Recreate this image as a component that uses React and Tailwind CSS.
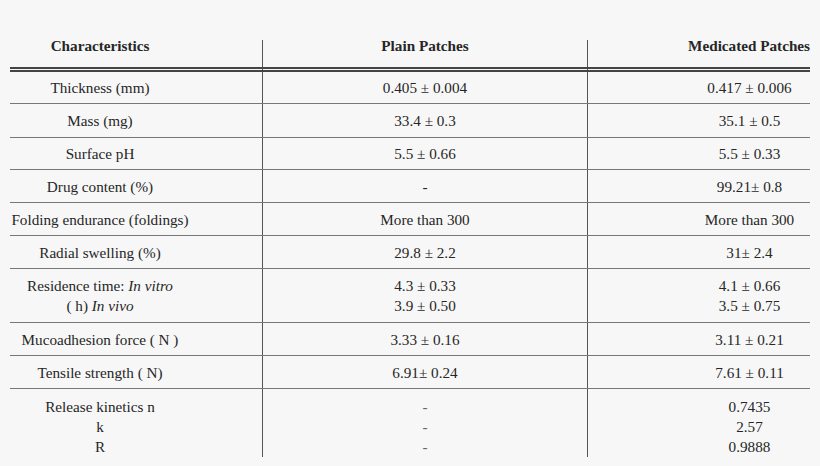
import React from "react";

const rows = [
  { h: "h-[32px]", c: ["Thickness (mm)"], p: ["0.405 ± 0.004"], m: ["0.417 ± 0.006"] },
  { h: "h-[34px]", c: ["Mass (mg)"], p: ["33.4 ± 0.3"], m: ["35.1 ± 0.5"] },
  { h: "h-[32px]", c: ["Surface pH"], p: ["5.5 ± 0.66"], m: ["5.5 ± 0.33"] },
  { h: "h-[33px]", c: ["Drug content (%)"], p: ["-"], m: ["99.21± 0.8"] },
  { h: "h-[33px]", c: ["Folding endurance (foldings)"], p: ["More than 300"], m: ["More than 300"] },
  { h: "h-[33px]", c: ["Radial swelling (%)"], p: ["29.8 ± 2.2"], m: ["31± 2.4"] },
  {
    h: "h-[54px]",
    c: [
      <>Residence time: <i>In vitro</i></>,
      <>( h) <i>In vivo</i></>,
    ],
    p: ["4.3 ± 0.33", "3.9 ± 0.50"],
    m: ["4.1 ± 0.66", "3.5 ± 0.75"],
  },
  { h: "h-[33px]", c: ["Mucoadhesion force ( N )"], p: ["3.33 ± 0.16"], m: ["3.11 ± 0.21"] },
  { h: "h-[33px]", c: ["Tensile strength ( N)"], p: ["6.91± 0.24"], m: ["7.61 ± 0.11"] },
];

function Lines({ items }) {
  return (
    <div className="flex flex-col items-center">
      {items.map((t, i) => (
        <div key={i} className="leading-[20px] whitespace-nowrap">{t}</div>
      ))}
    </div>
  );
}

export default function App() {
  return (
    <div className="w-[820px] h-[466px] bg-[#f7f7f7] text-[#262626] text-[15.2px] pt-[40px] pl-[10px] font-['Liberation_Serif','Times_New_Roman',serif]">
      <div className="w-[800px]">
        <div className="grid grid-cols-[252px_325px_223px] h-[27px] font-bold leading-[12px]">
          <div className="flex items-start justify-center pr-[72px]">Characteristics</div>
          <div className="flex items-start justify-center border-l border-[#555]">Plain Patches</div>
          <div className="flex items-start justify-end border-l border-[#555]">Medicated Patches</div>
        </div>
        <div className="grid grid-cols-[252px_325px_223px] h-[5px] border-y-2 border-[#444]">
          <div />
          <div className="border-l border-[#555]" />
          <div className="border-l border-[#555]" />
        </div>
        {rows.map((r, i) => (
          <div key={i} className={`grid grid-cols-[252px_325px_223px] ${r.h} border-b border-[#777]`}>
            <div className="flex items-center justify-center pr-[72px] pt-[1px]">
              <Lines items={r.c} />
            </div>
            <div className="flex items-center justify-center border-l border-[#555] pt-[1px]">
              <Lines items={r.p} />
            </div>
            <div className="flex items-center justify-center border-l border-[#555] pl-[101px] pt-[1px]">
              <Lines items={r.m} />
            </div>
          </div>
        ))}
        <div className="grid grid-cols-[252px_325px_223px] h-[67px]">
          <div className="flex justify-center pr-[72px] pt-[8px]">
            <Lines items={["Release kinetics n", "k", "R"]} />
          </div>
          <div className="flex justify-center border-l border-[#555] pt-[8px] text-[#666]">
            <Lines items={["-", "-", "-"]} />
          </div>
          <div className="flex justify-center border-l border-[#555] pl-[101px] pt-[8px]">
            <Lines items={["0.7435", "2.57", "0.9888"]} />
          </div>
        </div>
      </div>
    </div>
  );
}
